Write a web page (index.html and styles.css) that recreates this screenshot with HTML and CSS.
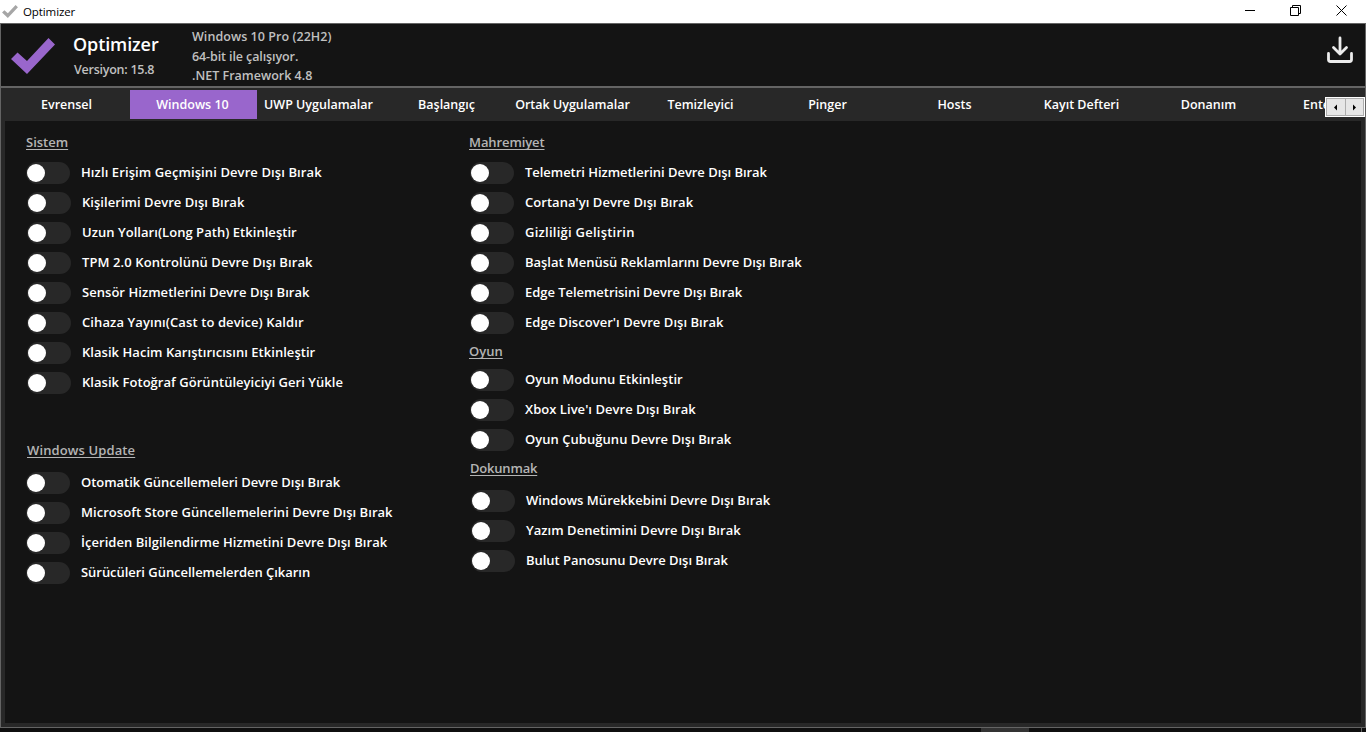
FILE: index.html
```html
<!DOCTYPE html>
<html lang="tr">
<head>
    <meta charset="UTF-8">
    <meta name="viewport" content="width=device-width, initial-scale=1.0">
    <title>Optimizer</title>
    <link rel="stylesheet" href="styles.css">
</head>
<body>
    <div id="titlebar">
        <svg class="title_icon" viewBox="0 0 44 36"><path d="M0 21 L6.500 14.500 L16 23 L37.500 0 L44 6.500 L16 36 Z"/></svg>
        <span class="title_text">Optimizer</span>
        <div class="win_btns">
            <svg width="11" height="11" viewBox="0 0 11 11"><path d="M0 5.500H10"/></svg>
            <svg width="11" height="11" viewBox="0 0 11 11"><path d="M0.500 2.500H8.500V10.500H0.500ZM2.500 2.500V0.500H10.500V8.500H8.500"/></svg>
            <svg width="11" height="11" viewBox="0 0 11 11"><path d="M0.500 0.500L10.500 10.500M10.500 0.500L0.500 10.500"/></svg>
        </div>
    </div>
    <div id="window">
        <header id="header">
            <svg class="logo" viewBox="0 0 44 36"><path d="M0 21 L6.500 14.500 L16 23 L37.500 0 L44 6.500 L16 36 Z"/></svg>
            <div class="app">
                <h1>Optimizer</h1>
                <p>Versiyon: 15.8</p>
            </div>
            <div class="info">
                <p class="os">Windows 10 Pro (22H2)</p>
                <p class="bit">64-bit ile çalışıyor.</p>
                <p class="net">.NET Framework 4.8</p>
            </div>
            <svg class="download" width="28" height="28" viewBox="0 0 28 28"><path d="M14 2V18M7.500 11.500L14 18L20.500 11.500M2.500 17.500V23.500Q2.500 25.500 4.500 25.500H23.500Q25.500 25.500 25.500 23.500V17.500"/></svg>
        </header>
        <nav id="tabs">
            <a class="tab">Evrensel</a>
            <a class="tab active">Windows 10</a>
            <a class="tab wide">UWP Uygulamalar</a>
            <a class="tab">Başlangıç</a>
            <a class="tab wide">Ortak Uygulamalar</a>
            <a class="tab">Temizleyici</a>
            <a class="tab">Pinger</a>
            <a class="tab">Hosts</a>
            <a class="tab">Kayıt Defteri</a>
            <a class="tab">Donanım</a>
            <a class="tab last">Ente</a>
            <div class="scroller">
                <span><svg width="5" height="7" viewBox="0 0 5 7"><path d="M4 0.500V6.500L1 3.500Z"/></svg></span>
                <span><svg width="5" height="7" viewBox="0 0 5 7"><path d="M1 0.500V6.500L4 3.500Z"/></svg></span>
            </div>
        </nav>
        <main id="panel">
            <div class="col">
                <section class="group system">
                    <h2>Sistem</h2>
                    <ul>
                        <li><i class="toggle"></i><span class="loose">Hızlı Erişim Geçmişini Devre Dışı Bırak</span></li>
                        <li><i class="toggle"></i><span>Kişilerimi Devre Dışı Bırak</span></li>
                        <li><i class="toggle"></i><span>Uzun Yolları(Long Path) Etkinleştir</span></li>
                        <li><i class="toggle"></i><span class="loose">TPM 2.0 Kontrolünü Devre Dışı Bırak</span></li>
                        <li><i class="toggle"></i><span>Sensör Hizmetlerini Devre Dışı Bırak</span></li>
                        <li><i class="toggle"></i><span class="loose">Cihaza Yayını(Cast to device) Kaldır</span></li>
                        <li><i class="toggle"></i><span>Klasik Hacim Karıştırıcısını Etkinleştir</span></li>
                        <li><i class="toggle"></i><span>Klasik Fotoğraf Görüntüleyiciyi Geri Yükle</span></li>
                    </ul>
                </section>
                <section class="group update">
                    <h2>Windows Update</h2>
                    <ul>
                        <li><i class="toggle"></i><span class="tight">Otomatik Güncellemeleri Devre Dışı Bırak</span></li>
                        <li><i class="toggle"></i><span>Microsoft Store Güncellemelerini Devre Dışı Bırak</span></li>
                        <li><i class="toggle"></i><span>İçeriden Bilgilendirme Hizmetini Devre Dışı Bırak</span></li>
                        <li><i class="toggle"></i><span class="tight">Sürücüleri Güncellemelerden Çıkarın</span></li>
                    </ul>
                </section>
            </div>
            <div class="col">
                <section class="group privacy">
                    <h2>Mahremiyet</h2>
                    <ul>
                        <li><i class="toggle"></i><span class="tight">Telemetri Hizmetlerini Devre Dışı Bırak</span></li>
                        <li><i class="toggle"></i><span>Cortana'yı Devre Dışı Bırak</span></li>
                        <li><i class="toggle"></i><span class="looser">Gizliliği Geliştirin</span></li>
                        <li><i class="toggle"></i><span class="tight">Başlat Menüsü Reklamlarını Devre Dışı Bırak</span></li>
                        <li><i class="toggle"></i><span class="tight">Edge Telemetrisini Devre Dışı Bırak</span></li>
                        <li><i class="toggle"></i><span>Edge Discover'ı Devre Dışı Bırak</span></li>
                    </ul>
                </section>
                <section class="group game">
                    <h2>Oyun</h2>
                    <ul>
                        <li><i class="toggle"></i><span>Oyun Modunu Etkinleştir</span></li>
                        <li><i class="toggle"></i><span>Xbox Live'ı Devre Dışı Bırak</span></li>
                        <li><i class="toggle"></i><span>Oyun Çubuğunu Devre Dışı Bırak</span></li>
                    </ul>
                </section>
                <section class="group touch">
                    <h2>Dokunmak</h2>
                    <ul>
                        <li><i class="toggle"></i><span>Windows Mürekkebini Devre Dışı Bırak</span></li>
                        <li><i class="toggle"></i><span>Yazım Denetimini Devre Dışı Bırak</span></li>
                        <li><i class="toggle"></i><span class="tight">Bulut Panosunu Devre Dışı Bırak</span></li>
                    </ul>
                </section>
            </div>
        </main>
    </div>
    <div id="taskbar"><span class="task"></span><span class="desktop"></span></div>
</body>
</html>
```

FILE: styles.css
```css
* { margin: 0; padding: 0; box-sizing: border-box; }
body {
    width: 1366px;
    height: 732px;
    overflow: hidden;
    background-color: #0f0f0f;
    font-family: "Open Sans", "Noto Sans", sans-serif;
    font-size: 13px;
    font-weight: 600;
    color: #fff;
}
ul { list-style: none; }
#titlebar {
    display: flex;
    align-items: center;
    height: 23px;
    background-color: #fff;
    color: #000;
}
.title_icon {
    width: 16px;
    height: 13px;
    margin-left: 2px;
    fill: #a6a6a6;
}
.title_text {
    margin-left: 5px;
    font-size: 11.5px;
    font-weight: 400;
    letter-spacing: -0.1px;
}
.win_btns {
    display: flex;
    gap: 34px;
    margin: -3px 19px 0 auto;
}
.win_btns svg {
    fill: none;
    stroke: #000;
    stroke-width: 1;
}
.win_btns svg:last-child { margin-left: 1px; }
/* 창 */
#window {
    display: flex;
    flex-direction: column;
    height: 705px;
    border: 1px solid #646464;
    background-color: #282828;
}
#header {
    display: flex;
    height: 64px;
    background-color: #141414;
    border-bottom: 2px solid #646464;
    color: #c0c0c0;
}
.logo {
    width: 44px;
    height: 36px;
    margin: 14px 0 0 10px;
    fill: #9966cc;
}
.app {
    width: 119px;
    margin-left: 18px;
}
.app h1 {
    margin-top: 7px;
    font-size: 18px;
    line-height: 26px;
    font-weight: 600;
    letter-spacing: -0.1px;
    color: #fff;
}
.app p {
    margin: 3px 0 0 1px;
    font-size: 12.5px;
    line-height: 20px;
    letter-spacing: -0.25px;
}
.info {
    padding-top: 3px;
    font-size: 12.5px;
    line-height: 19.5px;
}
.info .os { letter-spacing: 0.05px; }
.info .bit { letter-spacing: -0.1px; }
.download {
    margin: 12px 11px 0 auto;
    fill: none;
    stroke: #ececec;
    stroke-width: 2.8;
    stroke-linecap: round;
    stroke-linejoin: round;
}
/* 탭 */
#tabs {
    position: relative;
    display: flex;
    height: 33px;
    padding: 2px 0 0 2px;
    overflow: hidden;
}
.tab {
    flex: none;
    width: 127px;
    height: 29px;
    padding-right: 2px;
    font-size: 12.5px;
    line-height: 29px;
    text-align: center;
    white-space: nowrap;
}
.tab:first-child { padding-right: 0; }
.wide { padding-right: 4px; }
.last {
    width: 60px;
    padding: 0 0 0 30px;
    text-align: left;
}
.active { background-color: #9966cc; }
.scroller {
    position: absolute;
    right: 0;
    top: 9px;
    display: flex;
    width: 40px;
    height: 20px;
    border: 1px solid #fff;
    background-color: #adadad;
    padding: 1px;
    gap: 1px;
}
.scroller span {
    flex: 1;
    display: flex;
    align-items: center;
    justify-content: center;
    background-color: #e6e6e6;
}
/* 내용 */
#panel {
    flex: 1;
    display: flex;
    margin: 0 4px 4px;
    padding: 11px 0 0 21px;
    background-color: #141414;
}
.col { width: 443px; }
.group h2 {
    width: max-content;
    font-size: 13px;
    line-height: 20px;
    font-weight: 600;
    color: #b4b4b4;
    text-decoration: underline;
    text-underline-offset: 2px;
    text-decoration-thickness: 1px;
    text-decoration-skip-ink: none;
}
.group ul { padding-top: 6px; }
.group li {
    display: flex;
    align-items: center;
    height: 30px;
    white-space: nowrap;
}
.group li span {
    margin: -2px 0 0 11px;
    letter-spacing: 0.04px;
}
.group li .loose { letter-spacing: 0.1px; }
.group li .looser { letter-spacing: 0.25px; }
.group li .tight { letter-spacing: -0.04px; }
.toggle {
    width: 43.5px;
    height: 22px;
    margin-right: 0.5px;
    padding: 2px 1px;
    border-radius: 11px;
    background-color: #282828;
}
.toggle::before {
    content: "";
    display: block;
    width: 18px;
    height: 18px;
    border-radius: 50%;
    background-color: #fff;
}
.system li + li { padding-left: 1px; }
.update { margin-top: 42px; }
.update h2 {
    margin-left: 1px;
    letter-spacing: 0.12px;
}
.update ul { padding-top: 8px; }
.privacy h2 { letter-spacing: -0.1px; }
.privacy li, .game li { padding-left: 1px; }
.game { margin-top: 3px; }
.game ul { padding-top: 4px; }
.touch { margin-top: 3px; }
.touch h2 {
    margin-left: 1px;
    letter-spacing: -0.2px;
}
.touch ul { padding: 8px 0 0 2px; }
#taskbar {
    display: flex;
    height: 4px;
    background-color: #0f0f0f;
}
.task {
    width: 48px;
    margin-left: 981px;
    background-color: #333;
}
.desktop {
    width: 1px;
    margin-left: 332px;
    background-color: #646464;
}
```
